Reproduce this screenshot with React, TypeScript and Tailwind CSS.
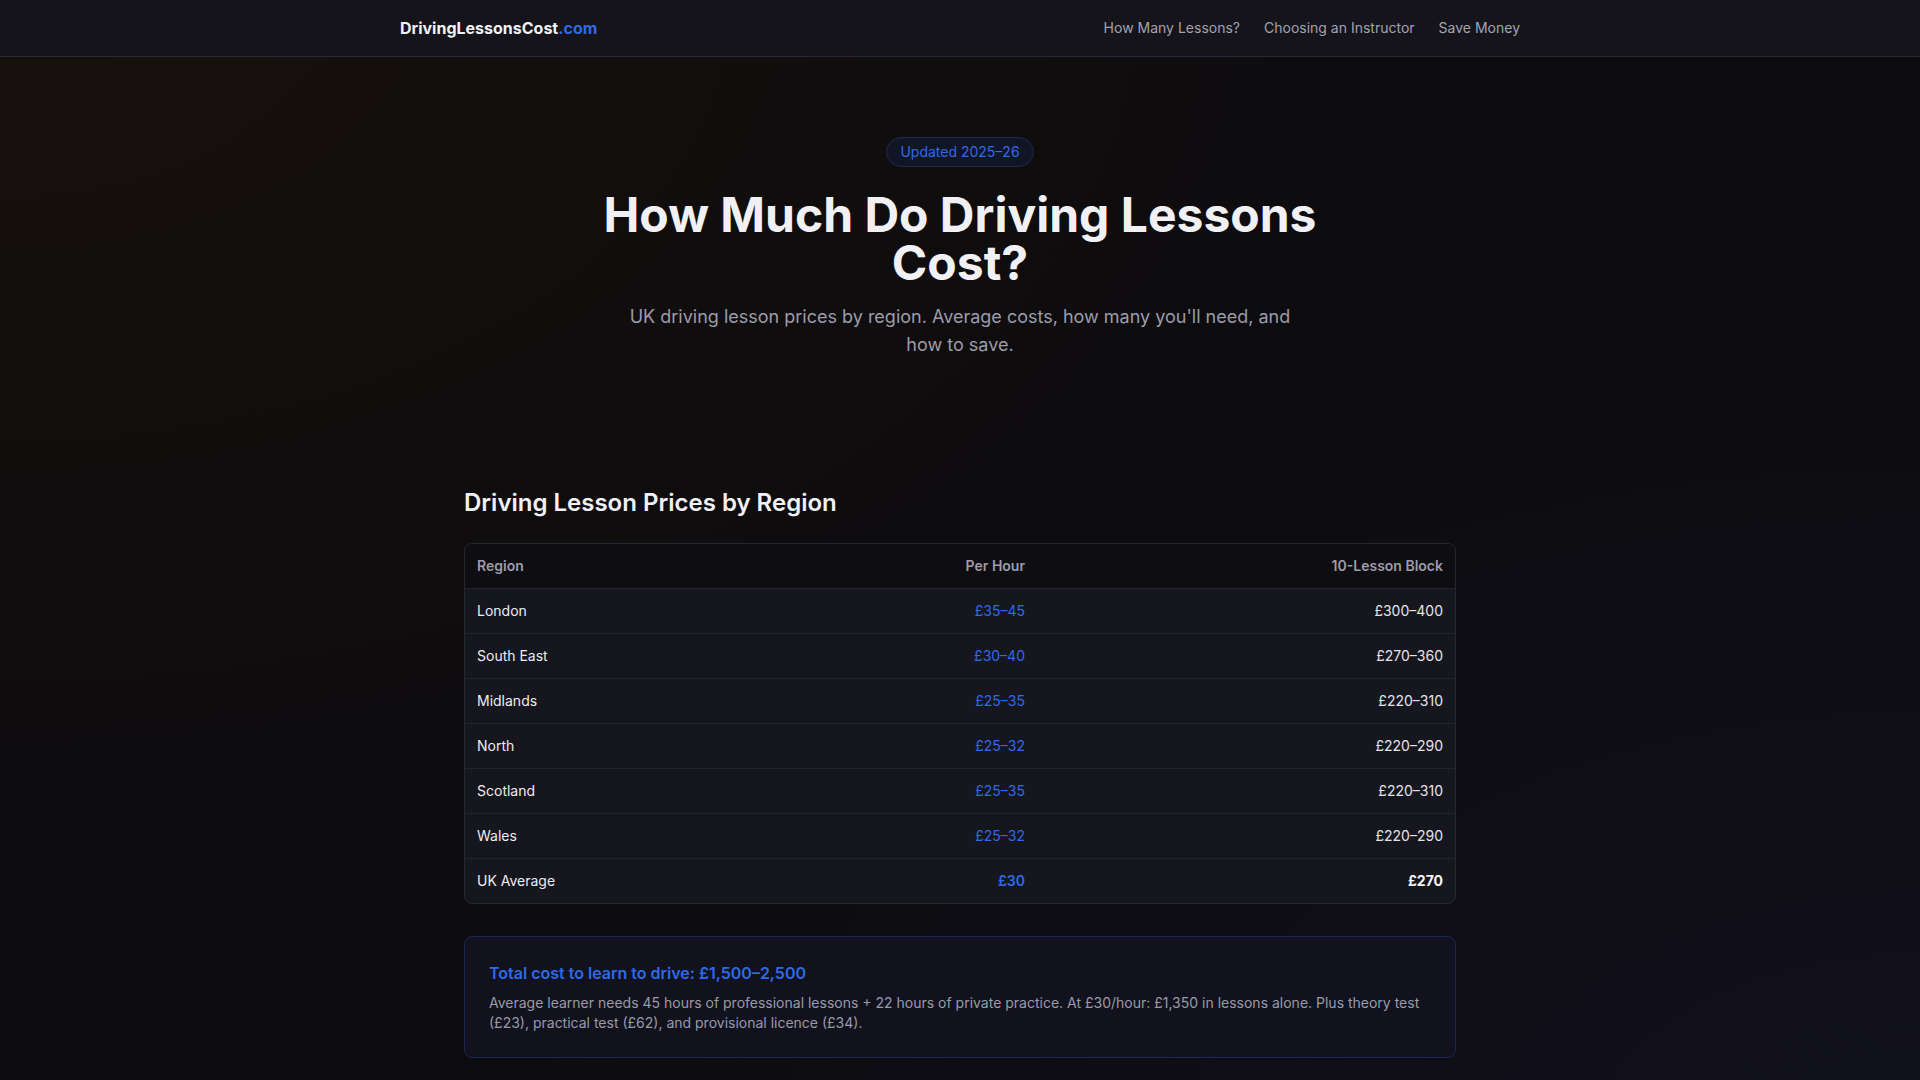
import React from 'react';

type PriceRow = {
  region: string;
  perHour: string;
  block: string;
  highlight?: boolean;
};

const rows: PriceRow[] = [
  { region: 'London', perHour: '£35–45', block: '£300–400' },
  { region: 'South East', perHour: '£30–40', block: '£270–360' },
  { region: 'Midlands', perHour: '£25–35', block: '£220–310' },
  { region: 'North', perHour: '£25–32', block: '£220–290' },
  { region: 'Scotland', perHour: '£25–35', block: '£220–310' },
  { region: 'Wales', perHour: '£25–32', block: '£220–290' },
  { region: 'UK Average', perHour: '£30', block: '£270', highlight: true },
];

const navLinks = ['How Many Lessons?', 'Choosing an Instructor', 'Save Money'];

const Header: React.FC = () => (
  <header className="h-[57px] border-b border-[#2a2a36] bg-[#14141a]">
    <div className="mx-auto flex h-full max-w-6xl items-center justify-between px-4">
      <a className="text-base font-bold text-[#f2f2f5]">
        DrivingLessonsCost<span className="text-[#2f6ae6]">.com</span>
      </a>
      <nav className="flex items-center gap-6">
        {navLinks.map((link) => (
          <a key={link} className="text-sm text-[#a3a3b0]">
            {link}
          </a>
        ))}
      </nav>
    </div>
  </header>
);

const Hero: React.FC = () => (
  <section className="mx-auto flex max-w-6xl flex-col items-center px-4 pt-20 pb-16 text-center">
    <span className="rounded-full border border-[#1d2a4d] bg-[#111626] px-[13px] py-[4px] text-sm text-[#2f6ae6]">
      Updated 2025–26
    </span>
    <h1 className="mt-6 max-w-3xl text-5xl font-bold leading-none text-[#f1f1f5]">
      How Much Do Driving Lessons Cost?
    </h1>
    <p className="mt-4 max-w-2xl text-lg leading-7 text-[#9c9caa]">
      UK driving lesson prices by region. Average costs, how many you'll need, and how to save.
    </p>
  </section>
);

const PriceTable: React.FC = () => (
  <div className="overflow-hidden rounded-lg border border-[#272732] bg-[#16161e]">
    <div className="grid grid-cols-[1fr_200px_418px] bg-[#0d0d12] text-sm font-semibold text-[#9d9dab]">
      <div className="px-3 py-3">Region</div>
      <div className="px-3 py-3 text-right">Per Hour</div>
      <div className="px-3 py-3 text-right">10-Lesson Block</div>
    </div>
    {rows.map((row) => (
      <div
        key={row.region}
        className="grid grid-cols-[1fr_200px_418px] border-t border-[#23232d] text-sm"
      >
        <div className="px-3 py-3 text-[#ececf1]">{row.region}</div>
        <div className={`px-3 py-3 text-right text-[#2f6ae6] ${row.highlight ? 'font-semibold' : ''}`}>
          {row.perHour}
        </div>
        <div className={`px-3 py-3 text-right ${row.highlight ? 'font-bold text-[#f5f5f8]' : 'text-[#e4e4ea]'}`}>
          {row.block}
        </div>
      </div>
    ))}
  </div>
);

const TotalCallout: React.FC = () => (
  <div className="mt-8 rounded-lg border border-[#1c2750] bg-[#11121d] p-6">
    <h3 className="mb-2 text-base font-semibold text-[#2f6ae6]">
      Total cost to learn to drive: £1,500–2,500
    </h3>
    <p className="text-sm leading-5 text-[#9a9aa8]">
      Average learner needs 45 hours of professional lessons + 22 hours of private practice. At £30/hour: £1,350 in
      lessons alone. Plus theory test (£23), practical test (£62), and provisional licence (£34).
    </p>
  </div>
);

export default function App() {
  return (
    <div className="min-h-screen bg-[#0c0b0e] bg-[radial-gradient(ellipse_at_top_left,#17110e_0%,transparent_55%),radial-gradient(ellipse_at_bottom_right,#11111d_0%,transparent_55%)] font-['Inter',sans-serif] antialiased">
      <Header />
      <main>
        <Hero />
        <section className="mx-auto max-w-5xl px-4 pt-16 pb-24">
          <h2 className="mb-6 text-2xl font-semibold text-[#f1f1f5]">
            Driving Lesson Prices by Region
          </h2>
          <PriceTable />
          <TotalCallout />
        </section>
      </main>
    </div>
  );
}
